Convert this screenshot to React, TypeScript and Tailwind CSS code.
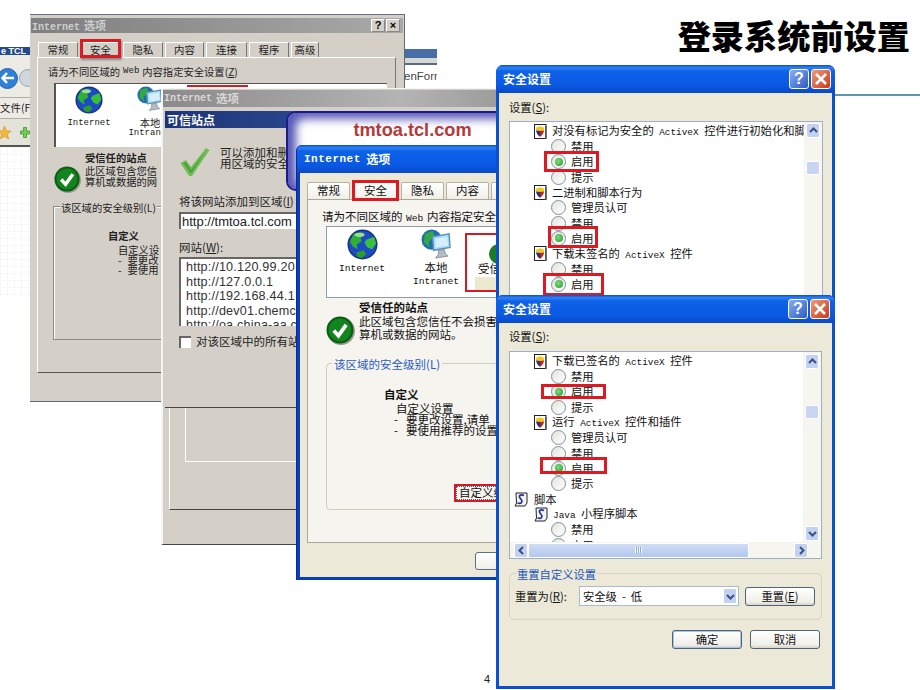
import React from "react";

const M = ({ children, className = "" }: { children: React.ReactNode; className?: string }) => (
  <span className={"font-[family-name:'Liberation_Mono',monospace] " + className}>{children}</span>
);

const Globe = ({ size }: { size: number }) => (
  <svg width={size} height={size} viewBox="0 0 32 32" className="shrink-0">
    <circle cx="16" cy="16" r="15.5" fill="#16337f" />
    <circle cx="16" cy="16" r="14" fill="#1c4bc4" />
    <path d="M7 5 L15 3 L19 6 L14 9 L15 13 L10 16 L11 21 L6 18 L3 13 Z" fill="#2fb12f" />
    <path d="M20 11 L28 8 L30 15 L26 21 L21 19 L18 14 Z" fill="#38c038" />
    <path d="M10 24 L17 22 L20 26 L15 30 L10 28 Z" fill="#2a9e2a" />
    <ellipse cx="13" cy="6" rx="5" ry="2.2" fill="#b8e8b0" opacity="0.8" />
  </svg>
);

const Monitor = ({ size }: { size: number }) => (
  <svg width={size} height={size} viewBox="0 0 32 32" className="shrink-0">
    <circle cx="11" cy="11" r="10.5" fill="#1f6fb0" />
    <path d="M4 5 L12 2 L14 8 L8 13 L9 19 L3 14 Z" fill="#35a840" />
    <path d="M12 8 L29 5 L30 19 L13 22 Z" fill="#a9dbf5" stroke="#5d93b8" strokeWidth="1.5" />
    <path d="M15 10 L27 8 L28 17 L15 19 Z" fill="#d6f0fb" />
    <path d="M18 22 L24 21 L25 25 L28 28 L15 30 L18 26 Z" fill="#b4bcc4" stroke="#7d8790" strokeWidth="0.8" />
  </svg>
);

const CheckCircle = ({ size, className = "" }: { size: number; className?: string }) => (
  <svg width={size} height={size} viewBox="0 0 28 28" className={"shrink-0 " + className}>
    <circle cx="14.5" cy="14.5" r="13.5" fill="#9a9a90" />
    <circle cx="13.5" cy="13.5" r="13" fill="#0d5c14" />
    <circle cx="13.5" cy="13.5" r="11" fill="#12851f" />
    <path d="M7.5 14 L12 19 L19.5 8.5" fill="none" stroke="#fff" strokeWidth="3.6" />
  </svg>
);

const BigCheck = () => (
  <svg width="30" height="30" viewBox="0 0 30 30" className="shrink-0">
    <path d="M0.5 16 L6 13 L11 20 L26 1 L29.5 3 L12 29 L9 29 Z" fill="#6fbe58" />
    <path d="M3 16 L6 15 L11 23 L26 4 L11 27 Z" fill="#4fa33c" />
  </svg>
);

const Shield = () => (
  <svg width="13" height="15" viewBox="0 0 13 15" className="shrink-0">
    <rect x="0.5" y="0.5" width="11.5" height="14" fill="#fff" stroke="#222" />
    <rect x="11" y="2" width="1.5" height="13" fill="#555" />
    <path d="M2 3.5 C4 3.5 5 2.5 6 2 C7 2.5 8 3.5 10 3.5 C10.2 8 8.5 11 6 12.8 C3.5 11 1.8 8 2 3.5 Z" fill="#f2c81e" />
    <path d="M6 7 L10 6.5 C9.8 9 8.2 11.4 6 12.8 Z" fill="#c42222" />
    <path d="M2.1 6.5 L6 7 L6 12.8 C3.8 11.2 2.4 9 2.1 6.5 Z" fill="#1f2f9c" />
  </svg>
);

const ScriptIcon = () => (
  <svg width="14" height="15" viewBox="0 0 14 15" className="shrink-0">
    <path d="M2 1 H13 V11 L11 14 H1 L2.5 11 Z" fill="#f4f4f4" stroke="#222" />
    <path d="M10 3.5 C6.5 2 4.5 3.5 6 6 C7.5 8 9 8.5 7.5 10.5 C6.5 12 5 11.5 3.5 11" fill="none" stroke="#27309a" strokeWidth="1.7" />
  </svg>
);

const Radio = ({ on }: { on?: boolean }) => (
  <span className="relative flex h-[15px] w-[15px] shrink-0 items-center justify-center rounded-full border border-[#7e919d] bg-[linear-gradient(135deg,#e4e4dc,#ffffff)]">
    {on && <span className="h-[8px] w-[8px] rounded-full bg-[radial-gradient(circle_at_40%_40%,#7fdc7f,#1f9a2c)]" />}
  </span>
);

const TitleBtns = () => (
  <div className="flex gap-[2px]">
    <div className="flex h-[20px] w-[20px] items-center justify-center rounded-[3px] border border-white bg-[linear-gradient(135deg,#8aaef0,#2b5cc8)] font-[family-name:'Liberation_Sans',sans-serif] text-[16px] font-bold leading-none text-white">
      ?
    </div>
    <div className="flex h-[20px] w-[20px] items-center justify-center rounded-[3px] border border-white bg-[linear-gradient(135deg,#f09a78,#c8391b)]">
      <svg width="14" height="14" viewBox="0 0 14 14">
        <path d="M2 2 L12 12 M12 2 L2 12" stroke="#fff" strokeWidth="2.6" />
      </svg>
    </div>
  </div>
);

const XpTitle = "bg-[linear-gradient(180deg,#0a4fd0_0%,#2f82f2_10%,#0d62e8_22%,#0a58e2_75%,#0a49c4_100%)]";

type Row = { t: "g" | "r" | "s" | "j"; label: React.ReactNode; on?: boolean };

const ListRows = ({ rows }: { rows: Row[] }) => (
  <>
    {rows.map((r, i) => (
      <div
        key={i}
        className={
          "flex h-[15.33px] shrink-0 items-center whitespace-nowrap " +
          (r.t === "r" ? "gap-[5px] pl-[41px]" : r.t === "s" ? "gap-[6px] pl-[4px]" : "gap-[5px] pl-[24px]")
        }
      >
        {r.t === "r" ? <Radio on={r.on} /> : r.t === "g" ? <Shield /> : <ScriptIcon />}
        <span>{r.label}</span>
      </div>
    ))}
  </>
);

const Ax = () => <M className="mx-[3px] text-[9.4px]">ActiveX</M>;

const ScrollBtn = ({ dir, className = "" }: { dir: "u" | "d" | "l" | "r"; className?: string }) => {
  const d = { u: "M2 7 L5.5 3.5 L9 7", d: "M2 4 L5.5 7.5 L9 4", l: "M7 2 L3.5 5.5 L7 9", r: "M4 2 L7.5 5.5 L4 9" }[dir];
  return (
    <div className={"flex h-[15px] w-[14px] shrink-0 items-center justify-center rounded-[2px] border border-white bg-[#c3d2f0] " + className}>
      <svg width="11" height="11" viewBox="0 0 11 11">
        <path d={d} fill="none" stroke="#3a4f86" strokeWidth="2" />
      </svg>
    </div>
  );
};

const XpBtn = ({ children, className = "" }: { children: React.ReactNode; className?: string }) => (
  <div className={"flex h-[19px] w-[70px] items-center justify-center rounded-[3px] border border-[#4f6478] bg-[linear-gradient(180deg,#ffffff,#f0efe8_80%,#d8d5c8)] text-[11.3px] " + className}>
    {children}
  </div>
);

const Red = ({ className }: { className: string }) => (
  <div className={"pointer-events-none absolute border-[3px] border-[#dd1a22] " + className} />
);

const rows1: Row[] = [
  { t: "g", label: <>对没有标记为安全的 <Ax /> 控件进行初始化和脚本</> },
  { t: "r", label: "禁用" },
  { t: "r", label: "启用", on: true },
  { t: "r", label: "提示" },
  { t: "g", label: "二进制和脚本行为" },
  { t: "r", label: "管理员认可" },
  { t: "r", label: "禁用" },
  { t: "r", label: "启用", on: true },
  { t: "g", label: <>下载未签名的 <Ax /> 控件</> },
  { t: "r", label: "禁用" },
  { t: "r", label: "启用", on: true },
];

const rows2: Row[] = [
  { t: "g", label: <>下载已签名的 <Ax /> 控件</> },
  { t: "r", label: "禁用" },
  { t: "r", label: "启用", on: true },
  { t: "r", label: "提示" },
  { t: "g", label: <>运行 <Ax /> 控件和插件</> },
  { t: "r", label: "管理员认可" },
  { t: "r", label: "禁用" },
  { t: "r", label: "启用", on: true },
  { t: "r", label: "提示" },
  { t: "s", label: "脚本" },
  { t: "j", label: <><M className="mr-[3px] text-[9.4px]">Java</M> 小程序脚本</> },
  { t: "r", label: "禁用" },
  { t: "r", label: "启用" },
];

const SecurityTop = () => (
  <div className="absolute left-[496px] top-[65px] flex h-[245px] w-[339px] flex-col overflow-hidden rounded-t-[7px] bg-[#0a50d0]">
    <div className={"flex h-[28px] shrink-0 items-center justify-between pl-[7px] pr-[4px] text-[12px] font-bold text-white " + XpTitle}>
      <span>安全设置</span>
      <TitleBtns />
    </div>
    <div className="mx-[3px] flex min-h-0 flex-1 flex-col bg-[#ece9d8] pl-[10px] pr-[9px]">
      <div className="flex h-[28px] shrink-0 items-center text-[11.3px] text-[#111]">
        设置(<span className="underline">S</span>):
      </div>
      <div className="relative flex min-h-0 flex-1 border border-[#9db1c6] bg-white text-[11.3px] text-[#111]">
        <div className="flex min-w-0 flex-1 flex-col overflow-hidden pt-[1.5px]">
          <ListRows rows={rows1} />
        </div>
        <div className="flex w-[18px] shrink-0 flex-col bg-[#f6f5f0] pl-[2px] pt-[1px]">
          <ScrollBtn dir="u" />
          <div className="mt-[23px] h-[14px] w-[14px] rounded-[2px] border border-white bg-[#c8d6f2]" />
        </div>
        <Red className="left-[34px] top-[29px] h-[21px] w-[55px]" />
        <Red className="left-[38px] top-[104px] h-[22px] w-[50px]" />
        <Red className="left-[33px] top-[151px] h-[23px] w-[61px]" />
      </div>
    </div>
  </div>
);

const SecurityBottom = () => (
  <div className="absolute left-[496px] top-[295px] flex h-[394px] w-[339px] flex-col overflow-hidden rounded-t-[7px] bg-[#0a50d0] pb-[3px]">
    <div className={"flex h-[28px] shrink-0 items-center justify-between pl-[7px] pr-[5px] text-[12px] font-bold text-white " + XpTitle}>
      <span>安全设置</span>
      <TitleBtns />
    </div>
    <div className="mx-[3px] flex min-h-0 flex-1 flex-col bg-[#ece9d8] pl-[10px] pr-[10px] text-[11.3px] text-[#111]">
      <div className="flex h-[28px] shrink-0 items-center pb-[1px]">
        设置(<span className="underline">S</span>):
      </div>
      <div className="relative flex h-[208px] shrink-0 flex-col border border-[#9db1c6] bg-white">
        <div className="flex min-h-0 flex-1">
          <div className="flex min-w-0 flex-1 flex-col overflow-hidden pt-[1.5px]">
            <ListRows rows={rows2} />
          </div>
          <div className="flex w-[18px] shrink-0 flex-col justify-between bg-[#f6f5f0] pb-[1px] pl-[2px] pt-[2px]">
            <div className="flex flex-col">
              <ScrollBtn dir="u" />
              <div className="mt-[36px] h-[14px] w-[14px] rounded-[2px] border border-white bg-[#c8d6f2]" />
            </div>
            <ScrollBtn dir="d" />
          </div>
        </div>
        <div className="flex h-[16px] shrink-0 items-center bg-[#f6f5f0] pl-[4px] pr-[13px]">
          <ScrollBtn dir="l" />
          <div className="flex h-[15px] w-[221px] items-center justify-center rounded-[2px] border border-white bg-[linear-gradient(180deg,#cfdcf5,#b4c8ee)]">
            <div className="h-[6px] w-[7px] bg-[repeating-linear-gradient(90deg,#fff_0,#fff_1px,#8ea6d8_1px,#8ea6d8_2px)]" />
          </div>
          <div className="flex-1" />
          <ScrollBtn dir="r" />
        </div>
        <Red className="left-[31px] top-[32px] h-[15px] w-[65px]" />
        <Red className="left-[30px] top-[105px] h-[17px] w-[67px]" />
      </div>
      <div className="relative mt-[14px] flex h-[47px] shrink-0 items-center rounded-[5px] border border-[#d8d4c4] pl-[5px] pr-[6px]">
        <span className="absolute -top-[8px] left-[7px] bg-[#ece9d8] pr-[1px] text-[#2657b8]">重置自定义设置</span>
        <div className="mt-[-1px] flex items-center">
          <span className="w-[64px] shrink-0">
            重置为(<span className="underline">R</span>):
          </span>
          <div className="flex h-[20px] w-[160px] items-center justify-between border border-[#a9bccd] bg-white pl-[3px] pr-[1px]">
            <span>
              安全级<span className="mx-[5px]">-</span>低
            </span>
            <ScrollBtn dir="d" className="h-[16px]" />
          </div>
          <XpBtn className="ml-[6px]">
            重置(<span className="underline">E</span>)
          </XpBtn>
        </div>
      </div>
      <div className="mt-[10px] flex justify-end gap-[8px] pr-[2px]">
        <XpBtn className="border-[#3a6ea8] shadow-[inset_0_0_0_1px_#a8c4e8]">确定</XpBtn>
        <XpBtn>取消</XpBtn>
      </div>
    </div>
  </div>
);

const W1Tab = ({ children, w }: { children: React.ReactNode; w: string }) => (
  <div className={"flex h-[15px] items-center justify-center border-l border-r border-t border-l-white border-r-[#777] border-t-white text-[10.4px] text-[#222] " + w}>
    {children}
  </div>
);

const WindowOne = () => (
  <div className="absolute left-[30px] top-[14px] flex h-[388px] w-[375px] flex-col border-b border-r border-t border-[#5e6a74] border-t-[#5f7486] bg-[#d4d0c8]">
    <div className="mx-[1px] mt-[3px] flex h-[15px] shrink-0 items-center justify-between bg-[linear-gradient(90deg,#7f7f7f,#a9a9a9)] pl-[1px] pr-[3px] text-[11px] font-bold text-[#cfcfcf]">
      <span>
        <M className="mr-[4px] text-[10px]">Internet</M>选项
      </span>
      <div className="flex gap-[1px]">
        <div className="flex h-[13px] w-[14px] items-center justify-center border border-[#888] border-l-white border-t-white bg-[#d4d0c8] font-[family-name:'Liberation_Sans',sans-serif] text-[11px] font-bold text-black">?</div>
        <div className="flex h-[13px] w-[14px] items-center justify-center border border-[#888] border-l-white border-t-white bg-[#d4d0c8] font-[family-name:'Liberation_Sans',sans-serif] text-[11px] font-bold text-black">×</div>
      </div>
    </div>
    <div className="mt-[9px] flex shrink-0 gap-[2px] pl-[8px]">
      <W1Tab w="w-[40px]">常规</W1Tab>
      <W1Tab w="w-[41px]">安全</W1Tab>
      <W1Tab w="w-[40px]">隐私</W1Tab>
      <W1Tab w="w-[39px]">内容</W1Tab>
      <W1Tab w="w-[41px]">连接</W1Tab>
      <W1Tab w="w-[40px]">程序</W1Tab>
      <W1Tab w="w-[28px]">高级</W1Tab>
    </div>
    <div className="ml-[7px] mr-[8px] flex h-[316px] shrink-0 flex-col border-b border-l border-r border-t border-white border-b-[#555] border-r-[#777] pl-[10px] text-[10.3px] text-[#222]">
      <div className="mt-[7px] flex h-[14px] shrink-0 items-center">
        请为不同区域的 <M className="mx-[3px] text-[9px]">Web</M> 内容指定安全设置(<span className="underline">Z</span>)
      </div>
      <div className="ml-[6px] mr-[8px] mt-[4px] flex h-[64px] shrink-0 items-start border-l-2 border-t border-[#555] border-b-white bg-white pl-[12px] pt-[2px]">
        <div className="flex w-[42px] flex-col items-center">
          <Globe size={28} />
          <M className="mt-[3px] whitespace-nowrap text-[9px] leading-[12px]">Internet</M>
        </div>
        <div className="ml-[19px] flex w-[42px] flex-col items-center">
          <Monitor size={26} />
          <span className="mt-[5px] leading-[11px]">本地</span>
          <M className="whitespace-nowrap text-[9px] leading-[11px]">Intranet</M>
        </div>
      </div>
      <div className="ml-[6px] mt-[19px] flex shrink-0 items-start gap-[4px]">
        <CheckCircle size={27} />
        <div className="-mt-[14px] leading-[11px]">
          <div className="mb-[2px] font-bold">受信任的站点</div>
          <div>此区域包含您信</div>
          <div>算机或数据的网</div>
        </div>
      </div>
      <div className="relative ml-[5px] mr-[6px] mt-[13px] h-[134px] shrink-0 border border-[#8a8a82] shadow-[inset_1px_1px_0_#fff]">
        <span className="absolute -top-[7px] left-[6px] bg-[#d4d0c8] px-[1px]">该区域的安全级别(L)</span>
        <div className="ml-[54px] mt-[22px] font-bold leading-[13px]">自定义</div>
        <div className="ml-[64px] mt-[3px] leading-[10px]">自定义设</div>
        <div className="ml-[64px] leading-[10px]">-<span className="ml-[6px]">要更改</span></div>
        <div className="ml-[64px] leading-[10px]">-<span className="ml-[6px]">要使用</span></div>
      </div>
    </div>
    <Red className="left-[50px] top-[24px] h-[19px] w-[41px] shadow-[1px_2px_2px_#888]" />
    <div className="absolute left-[157px] top-[70px] h-[2px] w-[61px] bg-[#dd1a22]" />
  </div>
);

const WindowTwo = () => (
  <div className="absolute left-[161px] top-[88px] flex h-[457px] w-[340px] flex-col border-b border-l-2 border-t border-[#f4f4f0] border-b-[#444] bg-[#d4d0c8]">
    <div className="mt-[1px] flex h-[17px] shrink-0 items-center bg-[linear-gradient(90deg,#8a8a8a,#b4b4b4_70%,#9c9c9c)] pl-[1px] text-[11.5px] font-bold text-[#d8d8d8]">
      <M className="mr-[4px] text-[10px]">Internet</M>选项
    </div>
    <div className="ml-[2px] mt-[4px] flex h-[297px] shrink-0 flex-col border-b border-b-[#444] text-[11.5px] text-[#222]">
      <div className="flex h-[17px] shrink-0 items-center bg-[linear-gradient(90deg,#1d3578,#3d5ea8)] pl-[2px] text-[12px] font-bold text-white">可信站点</div>
      <div className="ml-[15px] mt-[19px] flex items-start gap-[10px]">
        <BigCheck />
        <div className="leading-[11px]">
          <div>可以添加和删</div>
          <div>用区域的安全</div>
        </div>
      </div>
      <div className="ml-[14px] mt-[17px] h-[14px] leading-[14px]">
        将该网站添加到区域(<span className="underline">I</span>)
      </div>
      <div className="ml-[14px] mt-[4px] flex h-[17px] items-center border-l-2 border-t-2 border-[#666] bg-white pl-[1px] font-[family-name:'Liberation_Sans',sans-serif] text-[13px] text-[#222]">
        http://tmtoa.tcl.com
      </div>
      <div className="ml-[14px] mt-[11px] h-[14px] leading-[14px]">
        网站(<span className="underline">W</span>):
      </div>
      <div className="ml-[14px] mt-[3px] h-[69px] overflow-hidden border-l-2 border-t-2 border-[#666] bg-white pl-[5px] pt-[1px] font-[family-name:'Liberation_Sans',sans-serif] text-[12.6px] leading-[14.5px] tracking-[0.2px] text-[#333]">
        <div>http://10.120.99.20</div>
        <div>http://127.0.0.1</div>
        <div>http://192.168.44.1</div>
        <div>http://dev01.chemc</div>
        <div>http://oa.china-aa.co</div>
      </div>
      <div className="ml-[14px] mt-[7px] flex items-center gap-[5px]">
        <div className="h-[12px] w-[12px] border-l-2 border-t-2 border-[#666] bg-white" />
        <span>对该区域中的所有站</span>
      </div>
    </div>
    <div className="ml-[6px] flex h-[102px] shrink-0 flex-col border-b border-l border-b-[#444] border-l-white">
      <div className="ml-[15px] h-[54px] border-b border-l border-white" />
    </div>
  </div>
);

const XpTab = ({ children, w }: { children: React.ReactNode; w: string }) => (
  <div className={"flex h-[17px] shrink-0 items-center justify-center rounded-t-[2px] border border-b-0 border-[#b4b2a4] bg-[linear-gradient(180deg,#ffffff,#f0efe6)] text-[11.5px] " + w}>
    {children}
  </div>
);

const WindowThree = () => (
  <div className="absolute left-[296px] top-[145px] flex h-[435px] w-[200px] flex-col overflow-hidden rounded-tl-[6px] border-l border-[#0c2a9a] bg-[#0a3fb8] pb-[3px] pl-[3px]">
    <div className={"-ml-[3px] flex h-[28px] shrink-0 items-center pl-[7px] text-[12px] font-bold text-white " + XpTitle}>
      <M className="text-[11px] tracking-[0.5px]">Internet</M>&nbsp;&nbsp;选项
    </div>
    <div className="flex min-h-0 flex-1 flex-col bg-[#ece9d8] text-[11.5px] text-[#111]">
      <div className="mt-[9px] flex shrink-0 gap-[2px] pl-[7px]">
        <XpTab w="w-[43px]">常规</XpTab>
        <XpTab w="w-[47px]">安全</XpTab>
        <XpTab w="w-[43px]">隐私</XpTab>
        <XpTab w="w-[43px]">内容</XpTab>
        <XpTab w="w-[20px]"> </XpTab>
      </div>
      <div className="ml-[7px] flex h-[344px] w-[220px] shrink-0 flex-col whitespace-nowrap border border-[#aca899] bg-[#f5f4ef] pl-[18px]">
        <div className="-ml-[4px] mt-[9px] h-[14px] leading-[14px]">
          请为不同区域的 <M className="mx-[1px] text-[9.6px]">Web</M> 内容指定安全
        </div>
        <div className="mt-[3px] flex h-[72px] shrink-0 items-start border border-[#8f9daa] bg-white pt-[2px]">
          <div className="ml-[11px] flex w-[48px] flex-col items-center">
            <Globe size={31} />
            <M className="mt-[3px] text-[9.6px] leading-[12px]">Internet</M>
          </div>
          <div className="ml-[26px] flex w-[48px] flex-col items-center">
            <Monitor size={31} />
            <span className="mt-[1px] leading-[13px]">本地</span>
            <M className="mt-[2px] text-[9.6px] leading-[11px]">Intranet</M>
          </div>
        </div>
        <div className="mt-[3px] flex shrink-0 items-end gap-[4px]">
          <CheckCircle size={29} className="mb-[-4px]" />
          <div className="leading-[13px]">
            <div className="font-bold">受信任的站点</div>
            <div className="mt-[1px]">此区域包含您信任不会损害</div>
            <div>算机或数据的网站。</div>
          </div>
        </div>
        <div className="relative mt-[22px] h-[147px] w-[220px] shrink-0 rounded-[4px] border border-[#cfcdc0]">
          <span className="absolute -top-[8px] left-[5px] bg-[#f5f4ef] px-[2px] text-[#2a5bc0]">该区域的安全级别(L)</span>
          <div className="ml-[57px] mt-[24px] font-bold leading-[13px]">自定义</div>
          <div className="ml-[69px] mt-[2px] leading-[11px]">自定义设置</div>
          <div className="ml-[67px] leading-[11px]">-<span className="ml-[8px]">要更改设置,请单</span></div>
          <div className="ml-[67px] leading-[11px]">-<span className="ml-[8px]">要使用推荐的设置</span></div>
          <div className="ml-[127px] mt-[48px] flex h-[18px] w-[80px] items-center border-[2px] border-[#d41a26] pl-[3px] outline outline-1 -outline-offset-[3px] outline-dotted outline-[#555]">自定义级</div>
        </div>
      </div>
      <div className="ml-[175px] mt-[9px] h-[18px] w-[40px] rounded-[3px] border border-[#5d6f80] bg-[linear-gradient(180deg,#fff,#f0efe8)]" />
    </div>
    <Red className="left-[55px] top-[35px] h-[21px] w-[47px]" />
    <div className="absolute left-[168px] top-[88px] h-[59px] w-[40px] border-[2px] border-[#d41a26] bg-white">
      <div className="absolute left-[11px] top-[27px] whitespace-nowrap text-[11.5px] leading-[13px] text-[#111]">受信</div>
      <div className="absolute left-[8px] top-[42px] h-[13px] w-[40px] bg-[#ece9d0]" />
      <div className="absolute left-[22px] top-[9px] h-[20px] w-[20px] rounded-full bg-[#1c7a28]" />
    </div>
  </div>
);

export default function App() {
  return (
    <div className="relative h-[690px] w-[920px] overflow-hidden bg-white font-[family-name:'Noto_Sans_CJK_SC',sans-serif]">
      {/* browser fragment, left */}
      <div className="absolute left-0 top-[47px] flex w-[32px] flex-col overflow-hidden">
        <div className="flex h-[8px] items-center bg-[#274a8c] pl-[1px] font-[family-name:'Liberation_Sans',sans-serif] text-[9px] font-bold leading-none text-white">
          e TCL
        </div>
        <div className="flex h-[42px] items-center gap-[1px] bg-[#ecebe4] pb-[2px] pt-[6px]">
          <div className="-ml-[3px] flex h-[21px] w-[21px] shrink-0 items-center justify-center rounded-full border border-[#2c5fa8] bg-[#2f80d8]">
            <svg width="14" height="12" viewBox="0 0 14 12">
              <path d="M6 1 L1.5 6 L6 11 M2 6 H13" fill="none" stroke="#fff" strokeWidth="2.6" />
            </svg>
          </div>
          <div className="h-[18px] w-[18px] shrink-0 rounded-full border border-[#9aa8b8] bg-[#cfd6de]" />
        </div>
        <div className="flex h-[21px] items-center border-t border-[#b0afa6] bg-[#ecebe4] text-[10.5px] text-[#222]">文件(F</div>
        <div className="flex h-[29px] items-center justify-between border-b-2 border-t border-b-[#555] border-t-[#b0afa6] bg-[#e4e3da]">
          <svg width="13" height="13" viewBox="0 0 14 14" className="-ml-[2px] shrink-0">
            <path d="M7 0 L9 5 L14 5.5 L10 9 L11.5 14 L7 11 L2.5 14 L4 9 L0 5.5 L5 5 Z" fill="#f4b93a" stroke="#c98a1c" strokeWidth="0.6" />
          </svg>
          <svg width="10" height="11" viewBox="0 0 10 11" className="mr-[2px] shrink-0">
            <path d="M3.5 0.5 H6.5 V4 H9.5 V7 H6.5 V10.5 H3.5 V7 H0.5 V4 H3.5 Z" fill="#6fcf50" stroke="#3a8a2a" strokeWidth="0.7" />
          </svg>
        </div>
        <div className="h-[150px] bg-[linear-gradient(#f7f7f7_1px,transparent_1px),linear-gradient(90deg,#f7f7f7_1px,transparent_1px)] bg-[size:7px_7px]" />
      </div>
      {/* browser fragment, right */}
      <div className="absolute left-[404px] top-[49px] flex h-[40px] w-[33px] flex-col">
        <div className="h-[9px] bg-[#486ea8]" />
        <div className="h-[5px] bg-[#d8d8d2]" />
        <div className="h-[2px] bg-[#5a6a86]" />
        <div className="flex h-[24px] items-center overflow-hidden whitespace-nowrap font-[family-name:'Liberation_Sans',sans-serif] text-[11.5px] text-[#444]">
          enForm
        </div>
      </div>

      <WindowOne />
      <WindowTwo />

      {/* tmtoa banner */}
      <div className="absolute left-[286px] top-[111px] flex h-[80px] w-[225px] justify-center rounded-l-[10px] border-l-[2px] border-t-[2px] border-b-[2px] border-[#1a1a8c] bg-white pt-[5px] shadow-[inset_8px_6px_10px_#5a5ab8,inset_0_-6px_10px_#7a7ac8]">
        <span className="ml-[26px] font-[family-name:'Liberation_Sans',sans-serif] text-[18.2px] font-bold leading-[24px] text-[#b23a3a]">tmtoa.tcl.com</span>
      </div>

      <WindowThree />
      <SecurityTop />
      <SecurityBottom />

      <div className="absolute right-[10px] top-[12px] text-[33.2px] font-black leading-[46px] text-black">登录系统前设置</div>
      <div className="absolute left-[835px] top-[94px] h-[2px] w-[85px] bg-[#5e96ad]" />
      <div className="absolute left-[484px] top-[672px] font-[family-name:'Liberation_Sans',sans-serif] text-[11px] leading-[14px] text-[#222]">4</div>
    </div>
  );
}
